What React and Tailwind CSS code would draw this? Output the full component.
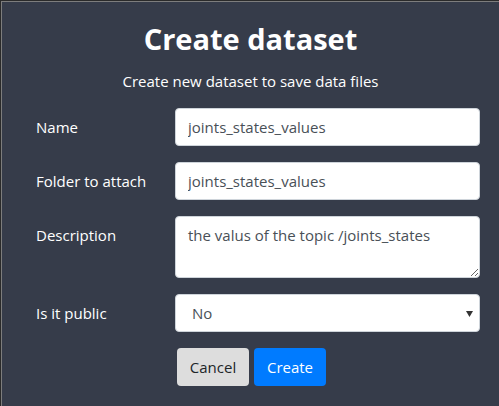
import React from "react";

export default function App() {
  const font = { fontFamily: '"Open Sans", "Noto Sans", "Liberation Sans", sans-serif' };
  return (
    <div className="w-[499px] h-[406px] bg-[#2a2a2a] pt-px pl-px overflow-hidden" style={font}>
      <div className="h-full border-t border-l border-[#7d7d7d] bg-[#363c4a] text-white">
        <h1 className="pt-[17px] text-center text-[29px] font-bold leading-[40px]">Create dataset</h1>
        <p className="mt-[12px] text-center text-[15px] leading-[20px]">Create new dataset to save data files</p>
        <div className="mt-[17px] pl-[34px] flex flex-col gap-4">
          <div className="flex items-center">
            <label className="w-[139px] text-[15px]">Name</label>
            <input readOnly defaultValue="joints_states_values" className="w-[305px] h-[38px] rounded bg-white border border-[#ced4da] px-3 text-[15px] text-[#495057] outline-none" />
          </div>
          <div className="flex items-center">
            <label className="w-[139px] text-[15px]">Folder to attach</label>
            <input readOnly defaultValue="joints_states_values" className="w-[305px] h-[38px] rounded bg-white border border-[#ced4da] px-3 text-[15px] text-[#495057] outline-none" />
          </div>
          <div className="flex items-start">
            <label className="w-[139px] text-[15px] pt-[8px]">Description</label>
            <textarea readOnly defaultValue="the valus of the topic /joints_states" className="block w-[305px] h-[62px] rounded bg-white border border-[#ced4da] px-3 py-[6px] text-[15px] leading-[24px] text-[#495057] outline-none" />
          </div>
          <div className="flex items-center">
            <label className="w-[139px] text-[15px]">Is it public</label>
            <div className="relative w-[305px] h-[38px] rounded bg-white border border-[#ced4da] text-[15px] text-[#495057] flex items-center pl-4">
              No
              <svg className="absolute right-[6px] top-[16px]" width="7" height="6" viewBox="0 0 7 6">
                <path d="M0 0 H7 L3.5 6 Z" fill="#333" />
              </svg>
            </div>
          </div>
          <div className="flex pl-[141px] gap-[5px]">
            <button className="w-[72px] h-[38px] rounded bg-[#dddddd] text-[#212529] text-[15px]">Cancel</button>
            <button className="w-[72px] h-[38px] rounded bg-[#007bff] text-white text-[15px]">Create</button>
          </div>
        </div>
      </div>
    </div>
  );
}
